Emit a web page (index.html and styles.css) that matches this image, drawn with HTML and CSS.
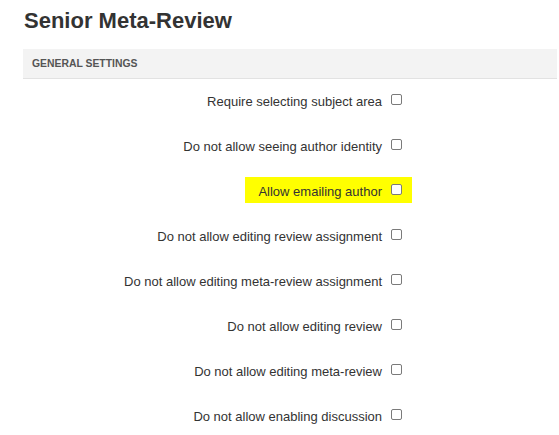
FILE: index.html
```html
<!DOCTYPE html>
<html>
<head>
<meta charset="utf-8">
<link rel="stylesheet" href="styles.css">
</head>
<body>
<div class="page">
  <h1 class="title">Senior Meta-Review</h1>
  <div class="section-head">General Settings</div>
  <div class="settings">
    <div class="row"><label class="opt"><span>Require selecting subject area</span><input type="checkbox" class="cb"></label></div>
    <div class="row"><label class="opt"><span>Do not allow seeing author identity</span><input type="checkbox" class="cb"></label></div>
    <div class="row"><label class="opt hl"><span>Allow emailing author</span><input type="checkbox" class="cb"></label></div>
    <div class="row"><label class="opt"><span>Do not allow editing review assignment</span><input type="checkbox" class="cb"></label></div>
    <div class="row"><label class="opt"><span>Do not allow editing meta-review assignment</span><input type="checkbox" class="cb"></label></div>
    <div class="row"><label class="opt"><span>Do not allow editing review</span><input type="checkbox" class="cb"></label></div>
    <div class="row"><label class="opt"><span>Do not allow editing meta-review</span><input type="checkbox" class="cb"></label></div>
    <div class="row"><label class="opt"><span>Do not allow enabling discussion</span><input type="checkbox" class="cb"></label></div>
  </div>
</div>
</body>
</html>
```

FILE: styles.css
```css
html, body {
  margin: 0;
  padding: 0;
  background: #fff;
}
body {
  font-family: "Liberation Sans", Arial, sans-serif;
  color: #333;
}
.page {
  padding: 0 2px 0 23px;
}
.title {
  margin: 0;
  padding: 8px 0 0 1px;
  height: 40px;
  box-sizing: border-box;
  font-size: 22px;
  line-height: 25px;
  font-weight: bold;
  color: #333;
}
.section-head {
  height: 30px;
  margin-top: 9px;
  background: #f3f3f3;
  border-bottom: 1px solid #e2e2e2;
  padding-left: 9px;
  font-size: 10.4px;
  font-weight: bold;
  text-transform: uppercase;
  color: #555;
  display: flex;
  align-items: center;
  box-sizing: border-box;
}
.settings {
  display: flex;
  flex-direction: column;
  gap: 19px;
  padding-top: 8px;
  width: 389px;
}
.row {
  display: flex;
  justify-content: flex-end;
}
.opt {
  display: inline-flex;
  align-items: center;
  gap: 9px;
  height: 26px;
  padding: 0 10px 0 13px;
  font-size: 13px;
  color: #333;
}
.opt span {
  position: relative;
  top: 1px;
}
.hl {
  background: #ffff00;
}
.cb {
  appearance: none;
  -webkit-appearance: none;
  margin: 0;
  width: 11px;
  height: 11px;
  border: 1px solid #7a7a7a;
  border-radius: 2px;
  background: #fff;
  box-sizing: border-box;
  position: relative;
  top: -1px;
}
```
